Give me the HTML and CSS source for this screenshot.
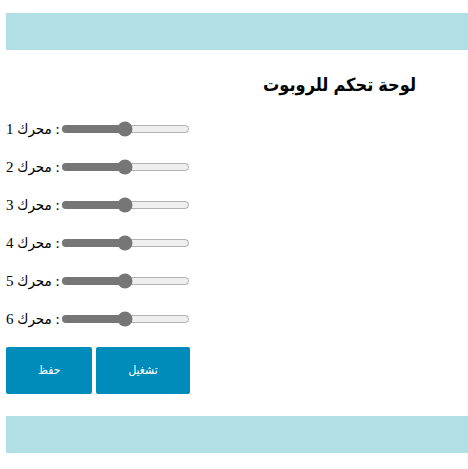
FILE: index.html
```html
<!DOCTYPE html>
<html lang="ar">
<head>
<meta charset="utf-8">
<title>لوحة تحكم للروبوت</title>
<link rel="stylesheet" href="styles.css">
</head>
<body>
<div class="page">
  <header class="bar top-bar"></header>
  <h1 class="title">لوحة تحكم للروبوت</h1>
  <div class="motors">
    <div class="motor-row"><label class="motor-label">محرك 1 :</label><input class="motor-slider" type="range" min="0" max="180" value="90"></div>
    <div class="motor-row"><label class="motor-label">محرك 2 :</label><input class="motor-slider" type="range" min="0" max="180" value="90"></div>
    <div class="motor-row"><label class="motor-label">محرك 3 :</label><input class="motor-slider" type="range" min="0" max="180" value="90"></div>
    <div class="motor-row"><label class="motor-label">محرك 4 :</label><input class="motor-slider" type="range" min="0" max="180" value="90"></div>
    <div class="motor-row"><label class="motor-label">محرك 5 :</label><input class="motor-slider" type="range" min="0" max="180" value="90"></div>
    <div class="motor-row"><label class="motor-label">محرك 6 :</label><input class="motor-slider" type="range" min="0" max="180" value="90"></div>
  </div>
  <div class="actions">
    <button class="btn" type="button">حفظ</button>
    <button class="btn" type="button">تشغيل</button>
  </div>
  <footer class="bar bottom-bar"></footer>
</div>
</body>
</html>
```

FILE: styles.css
```css
html {
  overflow: hidden;
}

body {
  margin: 0;
  font-family: "Liberation Serif", "DejaVu Sans Condensed", serif;
  font-size: 16px;
  color: #000;
  background: #fff;
}

.page {
  display: flex;
  flex-direction: column;
  padding: 13px 0 0 6px;
  width: 462px;
}

.bar {
  background: #b0e0e6;
  height: 37px;
}

.title {
  margin: 23px 0 13px;
  padding-right: 52px;
  height: 24px;
  line-height: 24px;
  font-family: "Liberation Sans", "DejaVu Sans Condensed", sans-serif;
  font-size: 18px;
  font-weight: bold;
  text-align: right;
}

.motors {
  display: flex;
  flex-direction: column;
}

.motor-row {
  height: 38px;
  display: flex;
  align-items: center;
}

.motor-label {
  white-space: nowrap;
  font-size: 15px;
}

.motor-slider {
  margin: 2px 2px 2px 1px;
  accent-color: #767676;
}

.actions {
  display: flex;
  gap: 4px;
  margin-top: 9px;
}

.btn {
  background: #008cba;
  color: #fff;
  border: none;
  border-radius: 2px;
  padding: 15px 32px;
  height: 47px;
  font-family: "Liberation Serif", "DejaVu Sans Condensed", serif;
  font-size: 12px;
}

.bottom-bar {
  margin-top: 22px;
}
```
